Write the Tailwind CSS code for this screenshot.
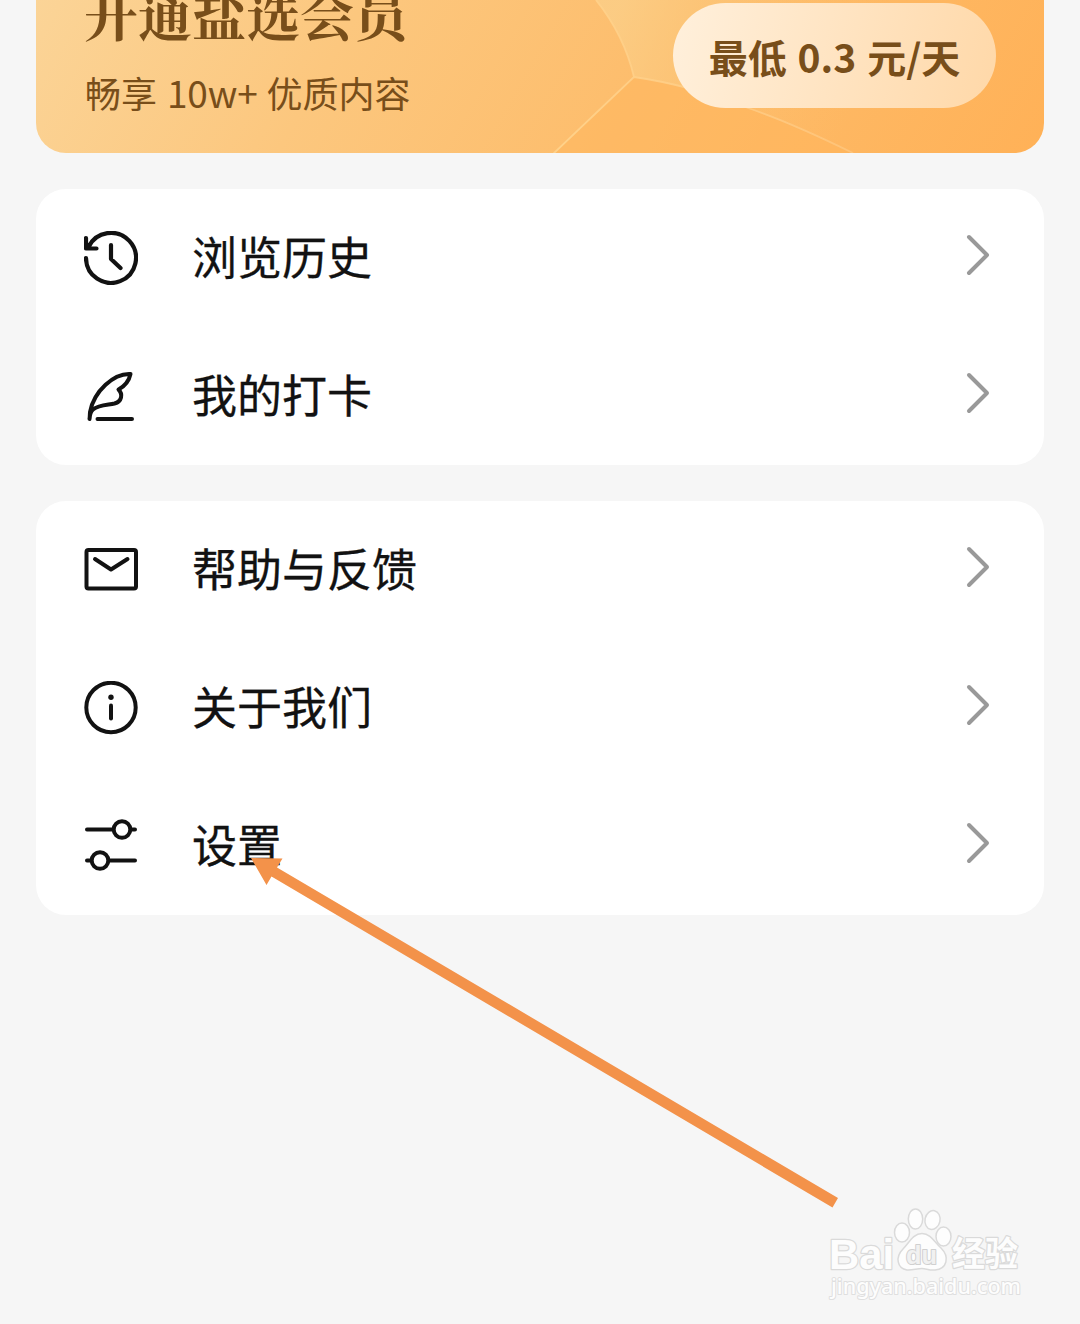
<!DOCTYPE html>
<html lang="zh-CN">
<head>
<meta charset="utf-8">
<title>我的</title>
<script src="https://cdn.jsdelivr.net/npm/@tailwindcss/browser@4"></script>
</head>
<body class="relative h-[1324px] w-[1080px] overflow-hidden bg-[#f6f6f6] px-9 font-['Noto_Sans_CJK_SC',sans-serif] text-[#121212]">
  <section class="relative flex h-[153px] justify-between overflow-hidden rounded-b-[30px] bg-linear-[120deg,#fbd497_0%,#fcc77e_30%,#fdbd6c_60%,#ffb157_100%] pr-12 pl-[49px] text-[#784e1a]">
    <svg class="absolute inset-0" width="1008" height="153" viewBox="36 0 1008 153" fill="none">
      <defs>
        <linearGradient id="facet" x1="620" y1="0" x2="860" y2="90" gradientUnits="userSpaceOnUse">
          <stop stop-color="#fbd08a" stop-opacity=".75"/><stop offset="1" stop-color="#fdbf6c" stop-opacity="0"/>
        </linearGradient>
        <linearGradient id="edge" x1="550" y1="0" x2="860" y2="0" gradientUnits="userSpaceOnUse">
          <stop stop-color="#ffd28a"/><stop offset="1" stop-color="#ffcb86" stop-opacity=".6"/>
        </linearGradient>
      </defs>
      <path d="M596 0Q624 35 634 77Q720 90 853 153H1044V0Z" fill="url(#facet)"/>
      <path d="M634 77L553 154H853Q720 90 634 77Z" fill="#ffb55c" fill-opacity=".5"/>
      <path d="M596 0Q624 35 634 77L553 154M634 77Q690 85 748 108Q790 122 853 153" stroke="url(#edge)" stroke-width="1.800"/>
    </svg>
    <div class="relative">
      <h1 class="-mt-[26px] -ml-px h-[80px] whitespace-nowrap font-['Noto_Serif_CJK_SC','Noto_Serif_SC','Noto_Sans_CJK_SC',serif] text-[54px] leading-[80px] font-bold">开通盐选会员</h1>
      <p class="mt-[11px] flex items-baseline whitespace-nowrap text-[36px] leading-[54px]"><span>畅享</span><span class="mr-[9px] ml-[10px] text-[37px] tracking-[-0.2px]">10w+</span><span>优质内容</span></p>
    </div>
    <div class="relative mt-[3px] flex h-[105px] w-[323px] items-center justify-center rounded-full bg-linear-[105deg,#fff0dc,#ffd8a8] text-[39px] leading-none font-bold whitespace-nowrap"><span class="mt-0.5 [word-spacing:2px]">最低 0.3 元/天</span></div>
  </section>

  <main class="mt-9 flex flex-col gap-9 [&_span]:mb-[5px] [&_span]:ml-[54px] [&_span]:text-[45px] [&_span]:leading-[66px] [&_span]:[-webkit-text-stroke:0.3px_#121212]">
    <section class="rounded-[30px] bg-white">
      <div class="flex h-[138px] items-center pr-[54px] pl-12">
        <svg width="54" height="54" viewBox="84 231 54 54" fill="none" stroke="currentColor" stroke-width="4.200" stroke-linecap="round" stroke-linejoin="round"><path d="M86 258A25 25 0 1 0 88.500 247M86 238V248.500H96.500M87 248L91 243M111 245V259L120.500 268"/></svg>
        <span>浏览历史</span>
        <svg class="mb-1.5 ml-auto" width="24" height="42" viewBox="0 0 24 42" fill="none" stroke="#999" stroke-width="4" stroke-linecap="round" stroke-linejoin="round"><path d="M3 3L21 21L3 39"/></svg>
      </div>
      <div class="flex h-[138px] items-center pr-[54px] pl-12">
        <svg width="54" height="54" viewBox="84 369 54 54" fill="none" stroke="currentColor" stroke-width="4" stroke-linecap="round" stroke-linejoin="round"><path d="M89.500 419Q90 412 93 409.500C99 404.500 108 405 114.500 403.500C122 401.500 123 394 118.500 389.500C125 386 129 381 130.500 374C114 373 94 391 90 412L89.700 418M97.500 419H132"/></svg>
        <span>我的打卡</span>
        <svg class="mb-1.5 ml-auto" width="24" height="42" viewBox="0 0 24 42" fill="none" stroke="#999" stroke-width="4" stroke-linecap="round" stroke-linejoin="round"><path d="M3 3L21 21L3 39"/></svg>
      </div>
    </section>

    <section class="rounded-[30px] bg-white">
      <div class="flex h-[138px] items-center pr-[54px] pl-12">
        <svg width="54" height="54" viewBox="84 543 54 54" fill="none" stroke="currentColor" stroke-width="4" stroke-linecap="round" stroke-linejoin="round"><rect x="86.500" y="550" width="49.500" height="38.500" rx="2"/><path d="M95 559L111 569.500L127.500 559"/></svg>
        <span>帮助与反馈</span>
        <svg class="mb-1.5 ml-auto" width="24" height="42" viewBox="0 0 24 42" fill="none" stroke="#999" stroke-width="4" stroke-linecap="round" stroke-linejoin="round"><path d="M3 3L21 21L3 39"/></svg>
      </div>
      <div class="flex h-[138px] items-center pr-[54px] pl-12">
        <svg width="54" height="54" viewBox="84 680 54 54" fill="none" stroke="currentColor" stroke-width="4" stroke-linecap="round"><circle cx="111" cy="706.500" r="24.700"/><path d="M111 704.500V717.500"/><circle cx="111" cy="696.300" r="2.700" fill="currentColor" stroke="none"/></svg>
        <span>关于我们</span>
        <svg class="mb-1.5 ml-auto" width="24" height="42" viewBox="0 0 24 42" fill="none" stroke="#999" stroke-width="4" stroke-linecap="round" stroke-linejoin="round"><path d="M3 3L21 21L3 39"/></svg>
      </div>
      <div class="flex h-[138px] items-center pr-[54px] pl-12">
        <svg width="54" height="54" viewBox="84 819 54 54" fill="none" stroke="currentColor" stroke-width="4" stroke-linecap="round"><path d="M87 829.500H112M132 829.500H135M87 860.500H90M110 860.500H135"/><circle cx="122" cy="829.500" r="8.300"/><circle cx="100" cy="860.500" r="8.300"/></svg>
        <span>设置</span>
        <svg class="mb-1.5 ml-auto" width="24" height="42" viewBox="0 0 24 42" fill="none" stroke="#999" stroke-width="4" stroke-linecap="round" stroke-linejoin="round"><path d="M3 3L21 21L3 39"/></svg>
      </div>
    </section>
  </main>

  <svg class="absolute top-[850px] left-[245px]" width="600" height="365" viewBox="245 850 600 365"><path d="M251 858L282.500 858.500L277 867.500L838 1198L832.500 1207.500L271.500 876.500L266.500 885Z" fill="#f3924a"/></svg>

  <svg class="absolute top-[1200px] left-[820px]" width="210" height="108" viewBox="820 1200 210 108" fill="#fdfdfd" stroke="#dadada" stroke-width="1.500" stroke-linejoin="round">
    <g stroke-width="2.500" paint-order="stroke">
      <text x="829" y="1269" font-family="Liberation Sans, sans-serif" font-weight="700" font-size="43" textLength="65" lengthAdjust="spacingAndGlyphs">Bai</text>
      <text x="952" y="1266" font-family="Noto Sans CJK SC, sans-serif" font-weight="700" font-size="34" textLength="66" lengthAdjust="spacingAndGlyphs">经验</text>
      <text x="831" y="1294" font-family="Noto Sans, sans-serif" font-size="21.500" font-weight="500" stroke="#dfdfdf" stroke-width="2" textLength="190" lengthAdjust="spacingAndGlyphs">jingyan.baidu.com</text>
    </g>
    <ellipse cx="902" cy="1232.500" rx="7.500" ry="9.500"/>
    <ellipse cx="915.500" cy="1219" rx="7.200" ry="10"/>
    <ellipse cx="932.500" cy="1220" rx="7.500" ry="9.500" transform="rotate(12 932.500 1220)"/>
    <ellipse cx="943.500" cy="1236.500" rx="7.500" ry="9.500"/>
    <path d="M922 1233.500C931 1233.500 935 1243 941 1248C950 1257 947 1269 935 1270C929 1270.500 926 1268.500 922 1268.500C917 1268.500 912 1270.500 907 1270C897 1268.500 895 1257 903 1249C909 1243 913 1233.500 922 1233.500Z"/>
    <text x="906" y="1264" font-family="Liberation Sans, sans-serif" font-size="25" font-weight="700" paint-order="stroke" fill="#f1f1f1" stroke="#d0d0d0" stroke-width="2" textLength="31" lengthAdjust="spacingAndGlyphs">du</text>
  </svg>
</body>
</html>
